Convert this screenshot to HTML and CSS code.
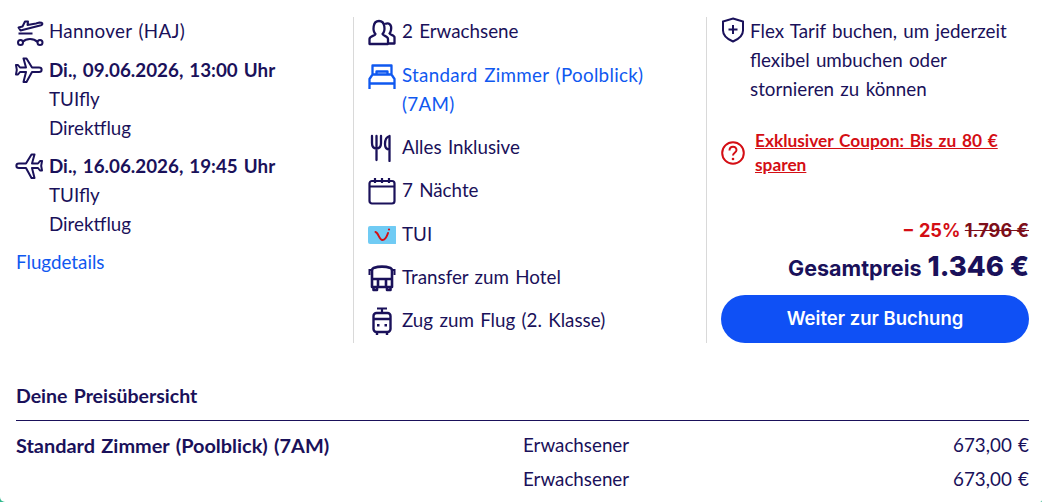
FILE: index.html
```html
<!DOCTYPE html>
<html lang="de">
<head>
<meta charset="utf-8">
<title>Angebot</title>
<link rel="stylesheet" href="styles.css">
</head>
<body>
<main class="page">
  <section class="summary">
    <div class="col col-flight">
      <div class="row flight-origin">
        <svg class="ico" viewBox="0 0 28 28"><path d="M2.500 9.500l4-1L9 3.500l3 0-.5 3.500 8.500-1.500 3.500-1 2 .2c1.500.5 1 2-.5 2.500L4.500 12.500z M2.500 15.500h14" fill="none" stroke="currentColor" stroke-width="2" stroke-linejoin="round"/><path d="M6.500 24c4-4 11-4 15 0" fill="none" stroke="currentColor" stroke-width="2"/><circle cx="4.500" cy="24.500" r="2.500" fill="none" stroke="currentColor" stroke-width="2"/><circle cx="24" cy="24.500" r="2.500" fill="none" stroke="currentColor" stroke-width="2"/></svg>
        <span class="wide-text">Hannover (HAJ)</span>
      </div>
      <div class="row flight-leg">
        <svg class="ico ico-wide" viewBox="0 0 28 28"><path d="M8.500 1.500h3l5.500 9h7c3.500 0 3.500 4.500 0 4.500h-7l-5.500 10h-3l2.500-10H5l-2 2.500H1l.8-4.700L1 8h2l2 2.500h6z" fill="none" stroke="currentColor" stroke-width="2" stroke-linejoin="round"/></svg>
        <div><strong>Di., 09.06.2026, 13:00 Uhr</strong><br>TUIfly<br>Direktflug</div>
      </div>
      <div class="row flight-leg">
        <svg class="ico ico-wide" viewBox="0 0 28 28"><path d="M19.500 1.500h-3L11 10.500H4c-3.500 0-3.500 4.500 0 4.500h7l5.500 10h3L17 15h6l2 2.500h2l-.8-4.700L27 8h-2l-2 2.500h-6z" fill="none" stroke="currentColor" stroke-width="2" stroke-linejoin="round"/></svg>
        <div><strong>Di., 16.06.2026, 19:45 Uhr</strong><br>TUIfly<br>Direktflug</div>
      </div>
      <a class="link details" href="#">Flugdetails</a>
    </div>

    <div class="col col-hotel">
      <div class="row item">
        <svg class="ico" viewBox="0 0 28 28"><path d="M1.500 26v-5c0-3 5.500-3 6-5-3-3-3-13 3.500-13s6.500 10 3.500 13c.5 2 5.500 2 5.500 5v5z M17 6c4-2 7 1 6 6-.3 1.500-1 3-1.500 3.500.5 1.500 5 1.500 5 4V25.500H20" fill="none" stroke="currentColor" stroke-width="2.300" stroke-linejoin="round"/></svg>
        <span>2 Erwachsene</span>
      </div>
      <div class="row item item-room">
        <svg class="ico" viewBox="0 0 28 28"><path d="M1.500 27V17l3-4.500V3.500h19v9l3 4.500v10M1.500 21.500h25M4.500 12.500h19M8.500 12.500v-3h11v3" fill="none" stroke="currentColor" stroke-width="2.300" stroke-linejoin="round"/></svg>
        <a class="link wide-text" href="#">Standard Zimmer (Poolblick) (7AM)</a>
      </div>
      <div class="row item">
        <svg class="ico" viewBox="0 0 28 28"><path d="M4 2v7c0 3.500 2 5.500 4.500 5.500S13 12.500 13 9V2M8.500 2v24M21.500 27V2c-3.500 1-4.500 5-4.500 8s1 5.500 4.500 5.500" fill="none" stroke="currentColor" stroke-width="2.300" stroke-linecap="round" stroke-linejoin="round"/></svg>
        <span>Alles Inklusive</span>
      </div>
      <div class="row item">
        <svg class="ico" viewBox="0 0 28 28"><rect x="1.500" y="4" width="25" height="22.500" rx="2.500" fill="none" stroke="currentColor" stroke-width="2.200"/><path d="M1.500 9.500h25M7 1v5M14 1v5M21 1v5" fill="none" stroke="currentColor" stroke-width="2.200"/></svg>
        <span>7 Nächte</span>
      </div>
      <div class="row item">
        <svg class="ico" viewBox="0 0 28 28"><rect x="0" y="5" width="29" height="18" rx="2" fill="#70cbf4"/><path d="M7.500 11c3 .5 3.500 8 7 8s4.500-4.500 5.500-7" fill="none" stroke="#d40e14" stroke-width="2" stroke-linecap="round"/><circle cx="21" cy="8.500" r="1.100" fill="#d40e14"/></svg>
        <span>TUI</span>
      </div>
      <div class="row item">
        <svg class="ico" viewBox="0 0 28 28"><path d="M5.500 4c6-2 11-2 17 0 1 .4 1.500 1.500 1.500 3v16H4V7c0-1.500.5-2.600 1.500-3zM4 15h20M10 15v8M18 15v8M5.500 23v3h3.500v-3M19 23v3h3.500v-3" fill="none" stroke="currentColor" stroke-width="2.600" stroke-linejoin="round"/><path d="M3.500 6H1.500v5M24.500 6h2v5" fill="none" stroke="currentColor" stroke-width="2"/></svg>
        <span>Transfer zum Hotel</span>
      </div>
      <div class="row item">
        <svg class="ico" viewBox="0 0 28 28"><path d="M9 1.500h10M14 2v4" fill="none" stroke="currentColor" stroke-width="2.200"/><rect x="5.500" y="6" width="17" height="19" rx="3" fill="none" stroke="currentColor" stroke-width="2.400"/><path d="M5.500 12h17M9 25v3M19 25v3" fill="none" stroke="currentColor" stroke-width="2.400"/><rect x="9" y="17" width="2.500" height="2.500" fill="currentColor"/><rect x="16.500" y="17" width="2.500" height="2.500" fill="currentColor"/></svg>
        <span>Zug zum Flug (2. Klasse)</span>
      </div>
    </div>

    <div class="col col-price">
      <div class="row flex-note">
        <svg class="ico ico-shield" viewBox="0 0 24 26"><path d="M12 1.500l10 3v9c0 5-4 8.500-10 11-6-2.500-10-6-10-11v-9z" fill="none" stroke="currentColor" stroke-width="2"/><path d="M12 8v9M7.500 12.500h9" fill="none" stroke="currentColor" stroke-width="2"/></svg>
        <span>Flex Tarif buchen, um jederzeit flexibel umbuchen oder stornieren zu können</span>
      </div>
      <div class="row coupon">
        <svg class="ico ico-help" viewBox="0 0 24 24"><circle cx="12" cy="12" r="10.800" fill="none" stroke="currentColor" stroke-width="2"/><path d="M8.500 9.500c0-5 7-5 7-.5 0 2.800-3.500 2.800-3.500 5.500" fill="none" stroke="currentColor" stroke-width="2"/><circle cx="12" cy="18" r="1.300" fill="currentColor"/></svg>
        <a class="coupon-link" href="#">Exklusiver Coupon: Bis zu 80 € sparen</a>
      </div>
      <div class="prices">
        <div class="discount"><span class="pct">− 25%</span> <s class="old">1.796 €</s></div>
        <div class="total"><span class="total-label">Gesamtpreis</span> <span class="total-value">1.346 €</span></div>
        <a class="cta" href="#">Weiter zur Buchung</a>
      </div>
    </div>
  </section>

  <section class="overview">
    <h2 class="overview-title">Deine Preisübersicht</h2>
    <div class="line">
      <strong class="line-name">Standard Zimmer (Poolblick) (7AM)</strong>
      <span>Erwachsener</span>
      <span class="amount">673,00 €</span>
    </div>
    <div class="line">
      <span class="line-name"></span>
      <span>Erwachsener</span>
      <span class="amount">673,00 €</span>
    </div>
  </section>
</main>
</body>
</html>
```

FILE: styles.css
```css
* { box-sizing: border-box; }
html, body { margin: 0; height: 502px; overflow: hidden; background: #2fb98c; }
body {
  font-family: "Lato", "Noto Sans", sans-serif;
  font-size: 18.8px;
  word-spacing: 1.5px;
  line-height: 28.8px;
  color: #1a115a;
}
.page { height: 502px; padding: 17px 13px 0 16px; background: #fff; border-radius: 0 0 2px 5px; }
.summary { display: grid; grid-template-columns: 337px 353px 323px; height: 326px; }
.col { display: flex; flex-direction: column; min-height: 0; padding-top: .4px; }
.col-hotel, .col-price { border-left: 1px solid #d9d9d9; padding-left: 14px; }
.row { display: flex; align-items: flex-start; gap: 5px; }
.col-hotel .row { gap: 6px; }
.wide-text { letter-spacing: .3px; }
.ico { width: 28px; height: 28px; flex: none; margin-top: 1px; }
.ico-wide { margin-left: -1px; margin-right: 1px; }
.flight-origin, .flight-leg { margin-bottom: 9.6px; }
.link { color: #0f58f0; text-decoration: none; }
.details { display: block; }
.item { margin-bottom: 14.4px; }
.item:last-child { margin-bottom: 0; }
.item-room .ico { color: #0f58f0; }
.item-room .link { width: 270px; }
.flex-note { gap: 5px; }
.ico-shield { width: 24px; height: 26px; margin-top: 0; }
.coupon { color: #d40e14; margin-top: 25px; gap: 10px; align-items: center; }
.ico-help { width: 24px; height: 24px; }
.coupon-link {
  color: #d40e14;
  font-weight: 700;
  font-size: 17.3px;
  line-height: 24px;
  width: 265px;
}
.prices { margin-top: auto; text-align: right; font-family: "Inter", "Liberation Sans", sans-serif; font-weight: 700; word-spacing: 0; }
.discount { font-size: 18.2px; line-height: 28px; color: #d40e14; }
.old { color: #7d0f1a; }
.total { line-height: 44px; margin-bottom: 5px; display: flex; justify-content: flex-end; align-items: baseline; gap: 6px; }
.total-label { font-size: 21.5px; }
.total-value { font-size: 27.5px; font-weight: 800; }
.cta {
  display: block;
  height: 48px;
  line-height: 46px;
  border-radius: 24px;
  background: #0f50f5;
  color: #fff;
  font-size: 18.5px;
  font-weight: 600;
  text-align: center;
  text-decoration: none;
}
.overview { margin-top: 39px; }
.overview-title {
  margin: 0;
  font-size: 19.5px;
  font-weight: 700;
  line-height: 28px;
  padding-bottom: 10px;
  border-bottom: 1px solid #1a115a;
}
.line { display: grid; grid-template-columns: 507px 1fr 200px; height: 34px; padding-top: 10px; }
.line-name { font-size: 19.9px; }
.amount { text-align: right; }
```
